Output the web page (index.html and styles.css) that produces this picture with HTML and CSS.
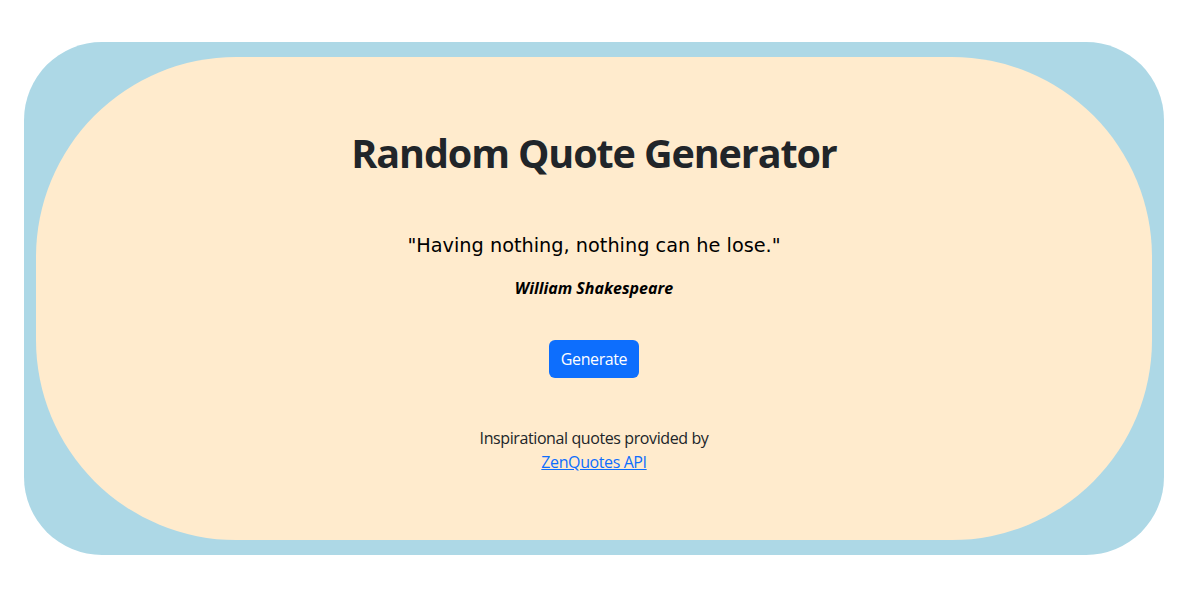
FILE: index.html
```html
<!DOCTYPE html>
<html lang="en">
<head>
<meta charset="utf-8">
<title>Random Quote Generator</title>
<link rel="stylesheet" href="styles.css">
</head>
<body>
<div class="frame">
  <main class="card">
    <h1 class="title">Random Quote Generator</h1>
    <p class="quote">"Having nothing, nothing can he lose."</p>
    <p class="author">William Shakespeare</p>
    <button class="btn" type="button">Generate</button>
    <footer class="credit">
      <p>Inspirational quotes provided by</p>
      <a href="#">ZenQuotes API</a>
    </footer>
  </main>
</div>
</body>
</html>
```
FILE: styles.css
```css
* { box-sizing: border-box; }
html, body { margin: 0; padding: 0; background: #fff; }
body {
  font-family: "Open Sans", "Noto Sans", sans-serif;
  font-size: 16px;
  line-height: 1.5;
  color: #212529;
  letter-spacing: -0.4px;
  padding: 42px 30px 0 24px;
}
.frame {
  width: 1140px;
  height: 513px;
  background: #add8e6;
  border-radius: 78px;
  padding: 15px 12px;
}
.card {
  height: 483px;
  background: #ffebcd;
  border-radius: 200px;
  display: flex;
  flex-direction: column;
  align-items: center;
  padding-top: 72px;
  text-align: center;
}
.title {
  margin: 0;
  font-size: 39.5px;
  line-height: 48px;
  font-weight: 700;
  letter-spacing: -1.1px;
  color: #212529;
}
.quote {
  margin: 54px 0 0;
  font-family: "DejaVu Sans", sans-serif;
  font-size: 19.3px;
  line-height: 30px;
  letter-spacing: 0;
  color: #000;
}
.author {
  margin: 15px 0 0;
  font-weight: 700;
  font-style: italic;
  letter-spacing: 0;
  color: #000;
  line-height: 24px;
}
.btn {
  margin-top: 40px;
  width: 90px;
  height: 38px;
  border: none;
  border-radius: 6px;
  background: #0d6efd;
  color: #fff;
  font-family: inherit;
  font-size: 16px;
  letter-spacing: -0.4px;
  padding: 0;
}
.credit {
  margin-top: 48px;
  line-height: 24px;
}
.credit p { margin: 0; }
.credit a { color: #0d6efd; text-decoration: underline; }
```
